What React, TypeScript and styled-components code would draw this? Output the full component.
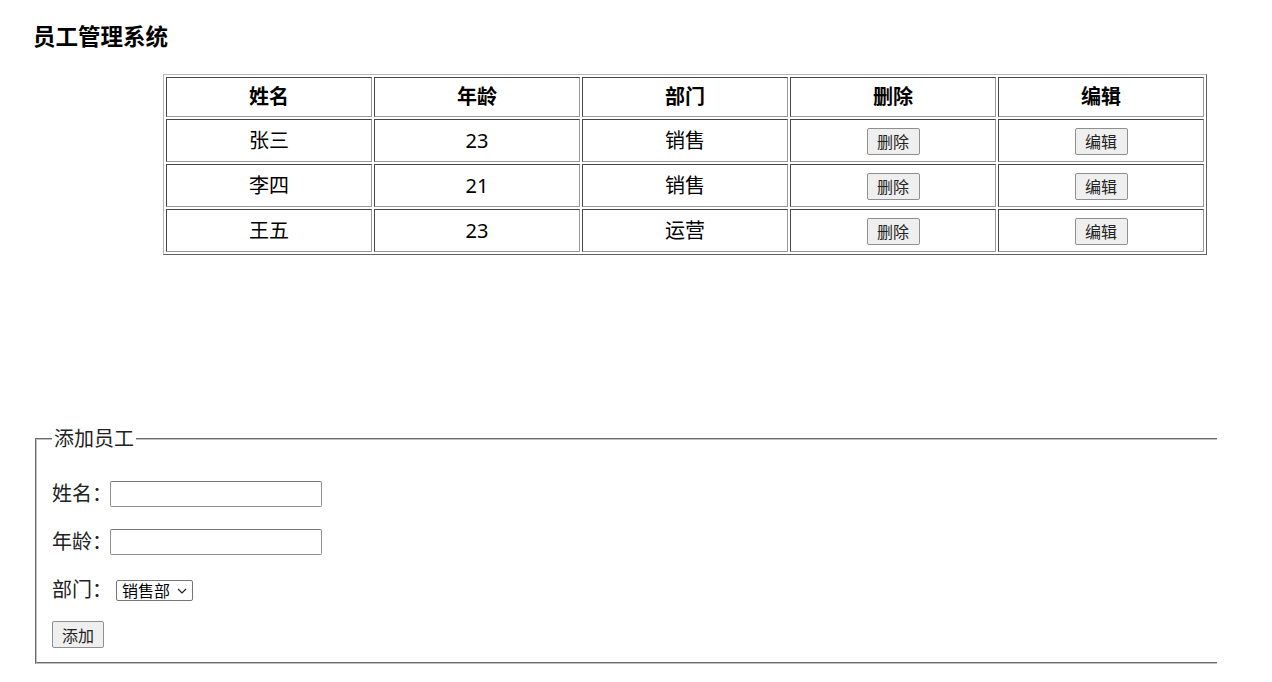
import styled, { createGlobalStyle } from 'styled-components';

const GlobalStyle = createGlobalStyle`
  html, body {
    margin: 0;
    padding: 0;
    background: #fff;
  }
  body {
    font-family: "Noto Sans", "Noto Sans CJK SC", sans-serif;
    color: #000;
  }
`;

const EMPLOYEES = [
  { name: '张三', age: 23, dept: '销售' },
  { name: '李四', age: 21, dept: '销售' },
  { name: '王五', age: 23, dept: '运营' },
];

const HEADERS = ['姓名', '年龄', '部门', '删除', '编辑'];

function App() {
  return (
    <>
      <GlobalStyle />
      <Page>
        <Title>员工管理系统</Title>
        <Table>
          <thead>
            <tr>
              {HEADERS.map((h) => (
                <Th key={h}>{h}</Th>
              ))}
            </tr>
          </thead>
          <tbody>
            {EMPLOYEES.map(({ name, age, dept }, idx) => (
              <tr key={`row-${idx}`}>
                <Td>{name}</Td>
                <Td>{age}</Td>
                <Td>{dept}</Td>
                <Td>
                  <SmallBtn>删除</SmallBtn>
                </Td>
                <Td>
                  <SmallBtn>编辑</SmallBtn>
                </Td>
              </tr>
            ))}
          </tbody>
        </Table>

        <FieldSet>
          <Legend>添加员工</Legend>
          <FieldList>
            <Field>
              <Label $width={58}>姓名：</Label>
              <TextInput type="text" />
            </Field>
            <Field>
              <Label $width={58}>年龄：</Label>
              <TextInput type="text" />
            </Field>
            <Field>
              <Label $width={64}>部门：</Label>
              <SelectWrap>
                <Select defaultValue="sales">
                  <option value="sales">销售部</option>
                  <option value="ops">运营部</option>
                </Select>
                <Chevron width="10" height="6" viewBox="0 0 10 6">
                  <path d="M1 1l4 4 4-4" fill="none" stroke="#222" strokeWidth="1.2" />
                </Chevron>
              </SelectWrap>
            </Field>
          </FieldList>
          <AddBtn>添加</AddBtn>
        </FieldSet>
      </Page>
    </>
  );
}

export default App;

const Page = styled.div`
  padding: 22px 0 0 33px;
  width: 1272px;
  box-sizing: border-box;
`;

const Title = styled.h3`
  margin: 0;
  font-size: 22.5px;
  line-height: 30px;
  font-weight: 700;
`;

const Table = styled.table`
  margin: 22px 0 0 130px;
  width: 1044px;
  table-layout: fixed;
  border-collapse: separate;
  border-spacing: 2px;
  border: 1px outset #b5b5b5;
`;

const Th = styled.th`
  height: 38px;
  padding: 0;
  border: 1px inset #9a9a9a;
  font-size: 20px;
  font-weight: 700;
  line-height: 26px;
  text-align: center;
`;

const Td = styled.td`
  height: 41px;
  padding: 0;
  border: 1px inset #9a9a9a;
  font-size: 20px;
  line-height: 26px;
  text-align: center;
  vertical-align: middle;
`;

const SmallBtn = styled.button`
  height: 27px;
  width: 53px;
  padding: 0;
  font-family: "Noto Sans CJK SC", sans-serif;
  font-size: 16px;
  line-height: 20px;
  color: #222;
  background: #efefef;
  border: 1px solid #8f8f8f;
  border-radius: 2px;
  vertical-align: middle;
`;

const FieldSet = styled.fieldset`
  margin: 171px 55px 0 2px;
  padding: 0 15px 14px 15px;
  border: 2px groove #c0c0c0;
  border-right: none;
  min-width: 0;
`;

const Legend = styled.legend`
  padding: 0 2px;
  font-size: 20px;
  line-height: 26px;
  color: #222;
`;

const FieldList = styled.div`
  display: flex;
  flex-direction: column;
  gap: 22px;
  margin-top: 29px;
`;

const Field = styled.div`
  display: flex;
  align-items: center;
  height: 26px;
`;

const Label = styled.span<{ $width: number }>`
  width: ${({ $width }) => $width}px;
  flex: none;
  white-space: nowrap;
  font-size: 20px;
  line-height: 26px;
  color: #222;
`;

const TextInput = styled.input`
  box-sizing: border-box;
  width: 212px;
  height: 26px;
  margin: 0;
  padding: 1px 2px;
  border: 1px solid #8f8f8f;
  border-top-color: #767676;
  border-radius: 2px;
  background: #fff;
`;

const SelectWrap = styled.div`
  position: relative;
  display: flex;
  width: 77px;
  height: 21px;
`;

const Select = styled.select`
  appearance: none;
  box-sizing: border-box;
  width: 100%;
  height: 21px;
  margin: 0;
  padding: 0 18px 0 5px;
  font-family: "Noto Sans CJK SC", sans-serif;
  font-size: 16px;
  line-height: 19px;
  color: #000;
  background: #fff;
  border: 1px solid #767676;
  border-radius: 2px;
`;

const Chevron = styled.svg`
  position: absolute;
  right: 6px;
  top: 8px;
  pointer-events: none;
`;

const AddBtn = styled(SmallBtn)`
  display: block;
  box-sizing: border-box;
  margin-top: 18px;
  width: 52px;
  height: 27px;
`;
